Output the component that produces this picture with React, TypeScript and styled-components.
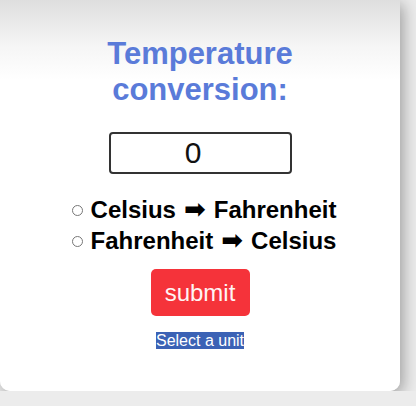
import React, { useState } from "react";
import styled, { createGlobalStyle } from "styled-components";

const Global = createGlobalStyle`
  html, body { margin: 0; padding: 0; background: #ececec; }
  body { font-family: Arial, "Liberation Sans", sans-serif; }
`;

const Card = styled.div`
  width: 400px;
  height: 391px;
  box-sizing: border-box;
  padding-top: 36px;
  background: linear-gradient(#dedede 0px, #f5f5f5 45px, #ffffff 80px);
  border-radius: 0 0 10px 10px;
  box-shadow: 3px 4px 16px rgba(0, 0, 0, 0.34);
  display: flex;
  flex-direction: column;
  align-items: center;
`;

const Title = styled.h1`
  margin: 0;
  font-size: 31px;
  line-height: 36px;
  font-weight: bold;
  color: #5a7bd9;
  text-align: center;
  width: 200px;
`;

const NumberInput = styled.input`
  margin-top: 24px;
  width: 183px;
  height: 42px;
  box-sizing: border-box;
  border: 2px solid #333;
  border-radius: 4px;
  font-family: Arial, "Liberation Sans", sans-serif;
  font-size: 30px;
  text-align: center;
  color: #111;
  padding: 0 14px 0 0;
  outline: none;
  background: #fff;
`;

const Options = styled.div`
  margin: 20px 0 0 8px;
  display: flex;
  flex-direction: column;
  align-items: flex-start;
`;

const Option = styled.label`
  display: flex;
  align-items: center;
  font-size: 24px;
  line-height: 31px;
  font-weight: bold;
  color: #000;
`;

const Radio = styled.input`
  appearance: none;
  width: 11px;
  height: 11px;
  margin: 2px 8px 0 0;
  border: 1px solid #777;
  border-radius: 50%;
  background: #fff;
`;

const Arrow = styled.span`
  font-family: "DejaVu Sans", sans-serif;
  font-size: 26px;
  margin: 0 8px;
`;

const SubmitButton = styled.button`
  margin-top: 13px;
  width: 99px;
  height: 47px;
  border: none;
  border-radius: 5px;
  background: #f5333a;
  color: #fff4f4;
  font-family: Arial, "Liberation Sans", sans-serif;
  font-size: 24px;
  padding: 0;
`;

const Message = styled.p`
  margin: 16px 0 0;
  font-size: 16px;
  line-height: 18px;
`;

const Highlight = styled.span`
  background: #3b62b5;
  color: #fff;
`;

export default function App() {
  const [value, setValue] = useState("0");
  return (
    <>
      <Global />
      <Card>
        <Title>Temperature conversion:</Title>
        <NumberInput value={value} onChange={(e) => setValue(e.target.value)} />
        <Options>
          <Option>
            <Radio type="radio" name="unit" />
            Celsius<Arrow>➡</Arrow>Fahrenheit
          </Option>
          <Option>
            <Radio type="radio" name="unit" />
            Fahrenheit<Arrow>➡</Arrow>Celsius
          </Option>
        </Options>
        <SubmitButton>submit</SubmitButton>
        <Message>
          <Highlight>Select a unit</Highlight>
        </Message>
      </Card>
    </>
  );
}
